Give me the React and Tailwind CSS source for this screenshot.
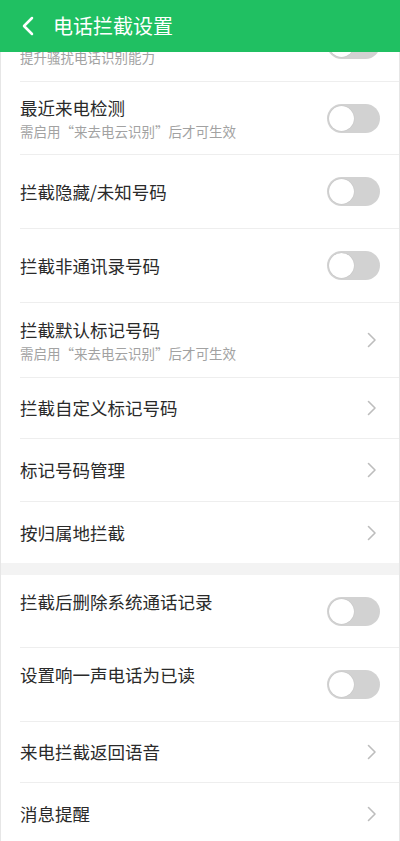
import React from "react";

const font = "font-['Noto_Sans_CJK_SC','Noto_Sans',sans-serif]";
const NOTE = "需启用“来去电云识别”后才可生效";

const rows = [
  { title: "", sub: "提升骚扰电话识别能力", type: "toggle", h: "h-[73px]" },
  { title: "最近来电检测", sub: NOTE, type: "toggle", h: "h-[72px]" },
  { title: "拦截隐藏/未知号码", type: "toggle", h: "h-[73px]" },
  { title: "拦截非通讯录号码", type: "toggle", h: "h-[73px]" },
  { title: "拦截默认标记号码", sub: NOTE, type: "arrow", h: "h-[74px]" },
  { title: "拦截自定义标记号码", type: "arrow", h: "h-[60px]" },
  { title: "标记号码管理", type: "arrow", h: "h-[62px]" },
  { title: "按归属地拦截", type: "arrow", h: "h-[61px]", last: true },
];

const rows2 = [
  { title: "拦截后删除系统通话记录", type: "toggle", h: "h-[72px]", raised: true },
  { title: "设置响一声电话为已读", type: "toggle", h: "h-[73px]", raised: true },
  { title: "来电拦截返回语音", type: "arrow", h: "h-[60px]" },
  { title: "消息提醒", type: "arrow", h: "h-[62px]", last: true },
];

function Toggle() {
  return (
    <div className="w-[53px] h-[29px] rounded-full bg-[#d2d2d2] flex items-center pl-[2px] shrink-0">
      <div className="w-[25px] h-[25px] rounded-full bg-white shadow-[0_0_1px_rgba(0,0,0,0.2)]" />
    </div>
  );
}

function Arrow() {
  return (
    <svg width="10" height="16" viewBox="0 0 10 16" className="mr-[3px] shrink-0">
      <path d="M1.5 1.5 L8 8 L1.5 14.5" fill="none" stroke="#bdbdbd" strokeWidth="1.6" strokeLinecap="round" strokeLinejoin="round" />
    </svg>
  );
}

function Row({ item }) {
  return (
    <div className={`ml-[19px] ${item.last ? "" : "border-b border-[#eeeeee]"}`}>
      <div className={`${item.h} flex justify-between items-center pr-[19px]`}>
        <div className={`flex flex-col ${item.raised ? "self-start pt-[15px]" : ""}`}>
          <span className="h-[24px] text-[17.5px] leading-[24px] text-[#2a2a2a]">{item.title}</span>
          {item.sub && (
            <span className="text-[13.5px] leading-[20px] mt-[1px] text-[#a2a2a2]">{item.sub}</span>
          )}
        </div>
        {item.type === "toggle" ? <Toggle /> : <Arrow />}
      </div>
    </div>
  );
}

export default function App() {
  return (
    <div className={`${font} w-[400px] h-[841px] overflow-hidden bg-white`}>
      <header className="relative z-10 h-[52px] bg-[#20c062] flex items-center">
        <svg width="14" height="20" viewBox="0 0 14 20" className="ml-[21px]">
          <path d="M11 2 L3 10 L11 18" fill="none" stroke="#fff" strokeWidth="2.5" strokeLinecap="round" strokeLinejoin="round" />
        </svg>
        <h1 className="ml-[18px] text-[20px] leading-none text-white font-normal">电话拦截设置</h1>
      </header>
      <main className="-mt-[44px] border-x border-[#e6e6e6] bg-white">
        {rows.map((item, i) => (
          <Row key={i} item={item} />
        ))}
        <div className="h-[12px] bg-[#f3f3f3]" />
        {rows2.map((item, i) => (
          <Row key={i} item={item} />
        ))}
      </main>
    </div>
  );
}
